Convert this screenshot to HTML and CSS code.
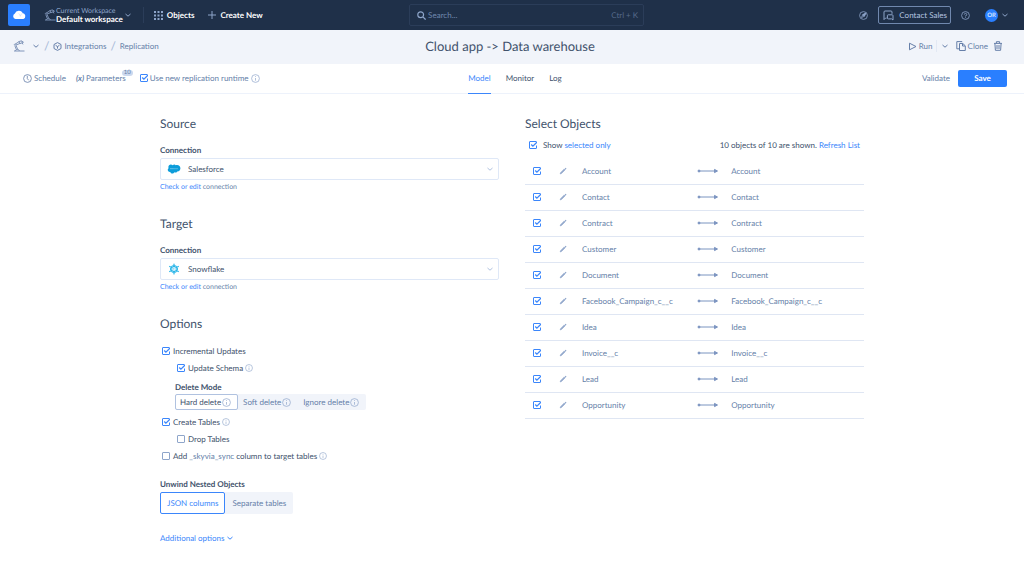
FILE: index.html
```html
<!DOCTYPE html>
<html lang="en">
<head>
    <meta charset="UTF-8">
    <title>Cloud app -> Data warehouse</title>
    <link rel="stylesheet" href="styles.css">
</head>
<body>
<svg class="sprite" aria-hidden="true">
    <symbol id="chevron" viewBox="0 0 8 8"><path d="M1.5 3 L4 5.2 L6.5 3"/></symbol>
    <symbol id="info" viewBox="0 0 9 9"><circle cx="4.5" cy="4.5" r="3.9"/><path d="M4.5 4 V6.7 M4.5 2.2 V3"/></symbol>
    <symbol id="robot" viewBox="0 0 12 12"><path d="M1 11 H11.5 M2.2 10.8 C2.4 9 6.2 9 6.4 10.8 M3.2 9.2 L1.8 5.6 M4.6 9.2 L3 5.4 M1.4 5.2 a.9 .9 0 1 1 1.5 .2 M2.4 4 L5.8 1.8 M3.2 5 L7 3.4 M5.8 1.6 L8.6 .8 L9.4 2.8 L7 3.5 Z M9 1.4 L10.8 2.4 M9.2 2.9 L10 4.4"/></symbol>
    <symbol id="pencil" viewBox="0 0 8 8"><path class="fill" d="M1.2 6.9 L1.6 5.7 L5.4 1.9 L6.2 2.7 L2.4 6.5 Z" stroke-width=".7"/><path d="M6.2 1.1 L7.1 2" stroke-width="1.2"/></symbol>
    <symbol id="arrow" viewBox="0 0 22 6"><path d="M2 3 H18"/><circle class="fill" cx="2" cy="3" r="1" /><path class="fill" d="M17.5 1.4 L20.5 3 L17.5 4.6 Z"/></symbol>
</svg>

<header class="topbar">
    <div class="top-left">
        <a class="logo" href="#" aria-label="Home">
            <svg viewBox="0 0 22 22"><path d="M7.5 15 A2.9 2.9 0 0 1 6.9 9.5 A4.3 4.3 0 0 1 14.7 8.9 A3.2 3.2 0 0 1 15.4 15 Z" fill="#fff"/><path d="M10.5 9.5 Q12 10 12.3 12.3 M14.7 9.3 Q12.8 9.8 12.3 12.3" fill="none" stroke="#b9d3ff" stroke-width=".5"/></svg>
        </a>
        <button class="workspace">
            <svg class="icon i12"><use href="#robot"/></svg>
            <span class="ws-text"><small>Current Workspace</small><b>Default workspace</b></span>
            <svg class="icon i8"><use href="#chevron"/></svg>
        </button>
        <button class="objects">
            <svg class="icon i9" viewBox="0 0 9 9"><path class="fill" d="M0 0h2v2H0z M3.5 0h2v2h-2z M7 0h2v2H7z M0 3.5h2v2H0z M3.5 3.5h2v2h-2z M7 3.5h2v2H7z M0 7h2v2H0z M3.5 7h2v2h-2z M7 7h2v2H7z" stroke="none"/></svg>
            Objects
        </button>
        <button class="create">
            <svg class="icon i8" viewBox="0 0 8 8"><path d="M4 0 V8 M0 4 H8"/></svg>
            Create New
        </button>
    </div>
    <label class="search">
        <svg class="icon i9" viewBox="0 0 9 9"><circle cx="3.7" cy="3.7" r="2.9" stroke-width="1.2"/><path d="M5.9 5.9 L8.6 8.6" stroke-width="1.3"/></svg>
        <input type="text" placeholder="Search..." aria-label="Search">
        <kbd>Ctrl + K</kbd>
    </label>
    <div class="top-right">
        <button aria-label="Explore"><svg class="icon i9 thin" viewBox="0 0 9 9"><circle cx="4.5" cy="4.5" r="3.9"/><path d="M2.5 6.5 L3.7 3.7 L6.7 2.3 L5.3 5.3 Z"/><path class="fill" d="M3.7 3.7 L6.7 2.3 L5.3 5.3 Z"/></svg></button>
        <button class="contact">
            <svg class="icon i11" viewBox="0 0 11 11"><path d="M3.6 8 H2.6 L1 9.6 V2 Q1 1 2 1 H8 Q9 1 9 2 V3.8 M5.2 4.8 H9.2 Q10 4.8 10 5.6 V10 L8.6 8.9 H5.2 Q4.4 8.9 4.4 8 V5.6 Q4.4 4.8 5.2 4.8 Z"/></svg>
            Contact Sales
        </button>
        <button aria-label="Help"><svg class="icon i9 thin" viewBox="0 0 9 9"><circle cx="4.5" cy="4.5" r="3.9"/><path d="M3.3 3.6 A1.2 1.2 0 1 1 4.5 4.8 V5.4 M4.5 6.2 V6.9"/></svg></button>
        <button class="user"><span class="avatar">OR</span><svg class="icon i8"><use href="#chevron"/></svg></button>
    </div>
</header>

<div class="titlebar">
    <nav class="crumbs">
        <button aria-label="Workspace"><svg class="icon i12"><use href="#robot"/></svg><svg class="icon i8"><use href="#chevron"/></svg></button>
        <span class="slash">/</span>
        <a href="#"><svg class="icon i9" viewBox="0 0 9 9"><path d="M4.5 .6 L8 2.5 V6.5 L4.5 8.4 L1 6.5 V2.5 Z M2.6 3.4 L4.5 4.5 L6.4 3.4 M4.5 4.5 V6.6"/></svg>Integrations</a>
        <span class="slash">/</span>
        <a href="#">Replication</a>
    </nav>
    <h1>Cloud app -&gt; Data warehouse</h1>
    <div class="actions">
        <button><svg class="icon i9" viewBox="0 0 9 9"><path d="M1.5 1.2 L8 4.5 L1.5 7.8 Z"/></svg>Run</button>
        <button class="run-more" aria-label="Run options"><svg class="icon i8"><use href="#chevron"/></svg></button>
        <button class="clone"><svg class="icon i10" viewBox="0 0 10 10"><path d="M3.5 2.5 H6.8 L9.3 4.8 V9.5 H3.5 Z M6.5 2.5 V5 H9 M3.3 7.8 H.8 V.6 H6.2"/></svg>Clone</button>
        <button aria-label="Delete"><svg class="icon i10" viewBox="0 0 10 10"><path d="M1 2.4 H9 M3.4 2.2 V.7 H6.6 V2.2 M1.9 2.6 L2.4 9.3 H7.6 L8.1 2.6 M4 4 V8 M6 4 V8"/></svg></button>
    </div>
</div>

<div class="toolbar">
    <div class="tools">
        <button><svg class="icon i9 thin" viewBox="0 0 9 9"><circle cx="4.5" cy="4.5" r="3.9"/><path d="M4.3 1.8 V4.7 L5.8 6.3"/></svg>Schedule</button>
        <button class="params"><i>(x)</i>Parameters<span class="badge">10</span></button>
        <label class="runtime"><input type="checkbox" checked>Use new replication runtime<svg class="icon i9 light"><use href="#info"/></svg></label>
    </div>
    <nav class="tabs">
        <a class="selected" href="#">Model</a>
        <a href="#">Monitor</a>
        <a href="#">Log</a>
    </nav>
    <div class="actions">
        <button>Validate</button>
        <button class="save">Save</button>
    </div>
</div>

<main class="content">
    <div class="column">
        <section class="connection">
            <h2>Source</h2>
            <label class="caption" for="source">Connection</label>
            <div class="select">
                <svg class="brand" viewBox="0 0 14 10"><path d="M5.7 1.3 C6.8 0 8.1 .4 8.7 1.3 C11.2 .3 13.6 2 13.4 4.6 C13.2 6.7 11.7 7.6 10.2 7.4 C9.5 8.7 8.3 8.7 7.4 8.3 C6.4 10.2 3.8 9.8 3.3 8 C.8 8.3 -.1 5.3 1.6 4.2 C.5 1.2 3.7 -.4 5.7 1.3 Z" fill="#0d9dda"/><path d="M3 4.7 H11" stroke="#a9def5" stroke-width=".7" stroke-dasharray=".8 .3"/></svg>
                <select id="source"><option>Salesforce</option></select>
                <svg class="icon i8 caret"><use href="#chevron"/></svg>
            </div>
            <p class="hint"><a href="#">Check or edit</a> connection</p>
        </section>
        <section class="connection">
            <h2>Target</h2>
            <label class="caption" for="target">Connection</label>
            <div class="select">
                <svg class="brand" viewBox="0 0 14 12"><g fill="none" stroke="#29b5e8" stroke-width="1.2" stroke-linecap="round"><path d="M7 5.4 L7.6 6 L7 6.6 L6.4 6 Z" stroke-width=".5"/><path id="flake" d="M7 1 V3.6 M5.7 2.8 L7 3.9 L8.3 2.8"/><use href="#flake" transform="rotate(60 7 6)"/><use href="#flake" transform="rotate(120 7 6)"/><use href="#flake" transform="rotate(180 7 6)"/><use href="#flake" transform="rotate(240 7 6)"/><use href="#flake" transform="rotate(300 7 6)"/></g></svg>
                <select id="target"><option>Snowflake</option></select>
                <svg class="icon i8 caret"><use href="#chevron"/></svg>
            </div>
            <p class="hint"><a href="#">Check or edit</a> connection</p>
        </section>
        <section class="options">
            <h2>Options</h2>
            <label class="check"><input type="checkbox" checked>Incremental Updates</label>
            <label class="check sub"><input type="checkbox" checked>Update Schema<svg class="icon i8 light"><use href="#info"/></svg></label>
            <div class="delete-mode">
                <span class="caption">Delete Mode</span>
                <div class="segments">
                    <button class="selected">Hard delete<svg class="icon i9 light"><use href="#info"/></svg></button>
                    <button>Soft delete<svg class="icon i9 light"><use href="#info"/></svg></button>
                    <button>Ignore delete<svg class="icon i9 light"><use href="#info"/></svg></button>
                </div>
            </div>
            <label class="check"><input type="checkbox" checked>Create Tables<svg class="icon i8 light"><use href="#info"/></svg></label>
            <label class="check sub"><input type="checkbox">Drop Tables</label>
            <label class="check"><input type="checkbox"><span>Add <em>_skyvia_sync</em> column to target tables</span><svg class="icon i8 light"><use href="#info"/></svg></label>
        </section>
        <section class="unwind">
            <span class="caption">Unwind Nested Objects</span>
            <div class="segments large">
                <button class="selected">JSON columns</button>
                <button>Separate tables</button>
            </div>
        </section>
        <button class="more">Additional options<svg class="icon i8"><use href="#chevron"/></svg></button>
    </div>

    <div class="column">
        <h2>Select Objects</h2>
        <div class="filter">
            <input type="checkbox" id="show" checked>
            <label for="show">Show <a href="#">selected only</a></label>
            <span class="count">10 objects of 10 are shown. <a href="#">Refresh List</a></span>
        </div>
        <table class="mapping">
            <tr><td class="c-check"><input type="checkbox" checked aria-label="Account"></td><td class="c-edit"><button aria-label="Edit"><svg class="icon i8"><use href="#pencil"/></svg></button></td><td class="c-name">Account</td><td class="c-arrow"><svg class="icon arrow"><use href="#arrow"/></svg></td><td>Account</td></tr>
            <tr><td class="c-check"><input type="checkbox" checked aria-label="Contact"></td><td class="c-edit"><button aria-label="Edit"><svg class="icon i8"><use href="#pencil"/></svg></button></td><td class="c-name">Contact</td><td class="c-arrow"><svg class="icon arrow"><use href="#arrow"/></svg></td><td>Contact</td></tr>
            <tr><td class="c-check"><input type="checkbox" checked aria-label="Contract"></td><td class="c-edit"><button aria-label="Edit"><svg class="icon i8"><use href="#pencil"/></svg></button></td><td class="c-name">Contract</td><td class="c-arrow"><svg class="icon arrow"><use href="#arrow"/></svg></td><td>Contract</td></tr>
            <tr><td class="c-check"><input type="checkbox" checked aria-label="Customer"></td><td class="c-edit"><button aria-label="Edit"><svg class="icon i8"><use href="#pencil"/></svg></button></td><td class="c-name">Customer</td><td class="c-arrow"><svg class="icon arrow"><use href="#arrow"/></svg></td><td>Customer</td></tr>
            <tr><td class="c-check"><input type="checkbox" checked aria-label="Document"></td><td class="c-edit"><button aria-label="Edit"><svg class="icon i8"><use href="#pencil"/></svg></button></td><td class="c-name">Document</td><td class="c-arrow"><svg class="icon arrow"><use href="#arrow"/></svg></td><td>Document</td></tr>
            <tr><td class="c-check"><input type="checkbox" checked aria-label="Facebook_Campaign_c__c"></td><td class="c-edit"><button aria-label="Edit"><svg class="icon i8"><use href="#pencil"/></svg></button></td><td class="c-name">Facebook_Campaign_c__c</td><td class="c-arrow"><svg class="icon arrow"><use href="#arrow"/></svg></td><td>Facebook_Campaign_c__c</td></tr>
            <tr><td class="c-check"><input type="checkbox" checked aria-label="Idea"></td><td class="c-edit"><button aria-label="Edit"><svg class="icon i8"><use href="#pencil"/></svg></button></td><td class="c-name">Idea</td><td class="c-arrow"><svg class="icon arrow"><use href="#arrow"/></svg></td><td>Idea</td></tr>
            <tr><td class="c-check"><input type="checkbox" checked aria-label="Invoice__c"></td><td class="c-edit"><button aria-label="Edit"><svg class="icon i8"><use href="#pencil"/></svg></button></td><td class="c-name">Invoice__c</td><td class="c-arrow"><svg class="icon arrow"><use href="#arrow"/></svg></td><td>Invoice__c</td></tr>
            <tr><td class="c-check"><input type="checkbox" checked aria-label="Lead"></td><td class="c-edit"><button aria-label="Edit"><svg class="icon i8"><use href="#pencil"/></svg></button></td><td class="c-name">Lead</td><td class="c-arrow"><svg class="icon arrow"><use href="#arrow"/></svg></td><td>Lead</td></tr>
            <tr><td class="c-check"><input type="checkbox" checked aria-label="Opportunity"></td><td class="c-edit"><button aria-label="Edit"><svg class="icon i8"><use href="#pencil"/></svg></button></td><td class="c-name">Opportunity</td><td class="c-arrow"><svg class="icon arrow"><use href="#arrow"/></svg></td><td>Opportunity</td></tr>
        </table>
    </div>
</main>
</body>
</html>
```
FILE: styles.css
```css
*{
    margin: 0;
    padding: 0;
    box-sizing: border-box;
}
body{
    font: 8px/12px Lato, sans-serif;
    text-rendering: geometricPrecision;
    color: #41526c;
    background: #fff;
}
a{
    color: #3b86fb;
    text-decoration: none;
}
button,input,select{
    font: inherit;
    color: inherit;
    text-rendering: inherit;
    border: none;
    background: none;
}
button{
    display: flex;
    align-items: center;
    white-space: nowrap;
    cursor: pointer;
}
h1,h2{
    font-weight: normal;
    line-height: 20px;
}
h1{
    font-size: 13px;
}
h2{
    font-size: 12px;
}
/* icons */
.sprite{
    display: none;
}
.icon{
    flex: none;
    display: block;
    fill: none;
    stroke: currentColor;
    stroke-width: 1;
}
.fill{
    fill: currentColor;
}
.i8{
    width: 8px;
    height: 8px;
}
.i9{
    width: 9px;
    height: 9px;
}
.i10{
    width: 10px;
    height: 10px;
}
.i11{
    width: 11px;
    height: 11px;
}
.i12{
    width: 12px;
    height: 12px;
    stroke-width: 0.8;
}
.thin{
    stroke-width: 0.8;
}
.light{
    color: #8ea5ca;
    stroke-width: 0.7;
}
input[type=checkbox]{
    appearance: none;
    flex: none;
    display: block;
    width: 8px;
    height: 8px;
    border: 1px solid #8ea5ca;
    border-radius: 1px;
}
input[type=checkbox]:checked{
    border: none;
    background: url("data:image/svg+xml,%3Csvg xmlns='http://www.w3.org/2000/svg' viewBox='0 0 8 8' fill='none' stroke='%233b86fb'%3E%3Cpath d='M7.5 4.5 V7.5 H.5 V.5 H7.5 V2'/%3E%3Cpath d='M2.2 3.5 L3.9 5.2 L7.4 1.8' stroke-width='1.3'/%3E%3C/svg%3E");
}
/* top bar */
.topbar{
    display: grid;
    grid-template-columns: 14fr 235px 13fr;
    align-items: center;
    height: 30px;
    background: #1f3049;
    color: #8ea5ca;
}
.top-left,.top-right{
    display: flex;
    align-items: center;
}
.top-left{
    padding-left: 8px;
}
.top-right{
    justify-content: flex-end;
    gap: 10px;
    padding-right: 15px;
}
.logo{
    width: 22px;
    height: 22px;
    border-radius: 2px;
    background: #2a7fff;
}
.logo svg{
    display: block;
}
.workspace{
    margin-left: 14px;
}
.ws-text{
    display: flex;
    flex-direction: column;
    margin-right: 1px;
    text-align: left;
    line-height: 8px;
}
.ws-text small{
    font-size: 7px;
}
.ws-text b{
    color: #fff;
}
.objects,.create{
    color: #fff;
    font-weight: bold;
}
.objects .icon,.create .icon{
    color: #8ea5ca;
    margin-right: 4px;
}
.objects{
    height: 16px;
    margin-left: 11px;
    padding-left: 10px;
    border-left: 1px solid #2b3d59;
}
.create{
    margin-left: 14px;
}
.search{
    display: flex;
    align-items: center;
    gap: 2px;
    height: 22px;
    padding: 0 5px 0 7px;
    border: 1px solid #2b3d59;
    border-radius: 2px;
}
.search input{
    flex: 1;
    min-width: 0;
    outline: none;
}
.search input::placeholder{
    color: #7088ae;
}
.search kbd{
    font: inherit;
    color: #566a8a;
}
.contact{
    gap: 5px;
    height: 18px;
    padding: 0 3px 0 4px;
    border: 1px solid #7088ae;
    border-radius: 2px;
    color: #b5c5e0;
}
.contact .icon{
    color: #8ea5ca;
}
.user{
    gap: 3px;
    margin-left: 5px;
}
.avatar{
    width: 13px;
    border-radius: 50%;
    background: #2a7fff;
    color: #d5e4ff;
    font-size: 6px;
    font-weight: bold;
    line-height: 13px;
    text-align: center;
}
/* title and tool bars */
.titlebar,.toolbar{
    display: grid;
    grid-template-columns: 1fr auto 1fr;
    align-items: center;
    color: #667fa9;
}
.titlebar{
    height: 34px;
    padding: 0 17px 2px 13px;
    background: #f1f4fa;
}
.titlebar h1{
    color: #41526c;
}
.titlebar .actions{
    padding-right: 4px;
}
.crumbs,.crumbs a,.crumbs button,.tools,.actions{
    display: flex;
    align-items: center;
}
.crumbs{
    gap: 4px;
}
.crumbs a{
    gap: 2px;
    color: #667fa9;
}
.crumbs button{
    gap: 7px;
}
.slash{
    color: #a9bbd9;
    font-size: 12px;
}
.actions{
    justify-content: flex-end;
}
.actions button{
    gap: 2px;
}
.run-more{
    height: 12px;
    margin-left: 3px;
    padding: 0 7px 0 4px;
    border-left: 1px solid #e3e9f4;
}
.clone{
    margin-right: 5px;
}
.toolbar{
    height: 30px;
    padding: 0 17px 0 23px;
    border-bottom: 1px solid #edf2fb;
}
.tools,.toolbar .actions{
    padding-bottom: 2px;
}
.tools button,.runtime{
    display: flex;
    align-items: center;
    gap: 2px;
}
.params{
    position: relative;
    margin: 0 14px 0 10px;
}
.params i{
    font-weight: bold;
}
.badge{
    position: absolute;
    top: -2px;
    right: -7px;
    padding: 0 2px;
    border-radius: 4px;
    background: #cbd8ee;
    font-size: 6px;
    line-height: 6px;
}
.tabs{
    display: flex;
    gap: 15px;
    height: 30px;
}
.tabs a{
    color: #41526c;
    line-height: 28px;
    border-bottom: 1px solid transparent;
}
.tabs .selected{
    color: #3b86fb;
    border-color: #3b86fb;
}
.save.save{
    justify-content: center;
    width: 49px;
    height: 17px;
    margin-left: 8px;
    border-radius: 2px;
    background: #2a7fff;
    color: #fff;
    font-weight: bold;
}
/* content */
.content{
    display: grid;
    grid-template-columns: 1fr 1fr;
    gap: 26px;
    max-width: 704px;
    margin: 0 auto;
    padding: 20px 0;
}
.caption{
    display: block;
    font-weight: bold;
}
.connection{
    margin-bottom: 21px;
}
.connection h2{
    margin-bottom: 10px;
}
.select{
    position: relative;
    margin: 2px 0 1px;
}
.select select{
    display: block;
    appearance: none;
    width: 100%;
    height: 22px;
    padding-left: 27px;
    border: 1px solid #dfe8f7;
    border-radius: 2px;
}
.brand{
    position: absolute;
    top: 5px;
    left: 7px;
    width: 14px;
    height: 12px;
}
.caret{
    position: absolute;
    top: 7px;
    right: 5px;
    color: #b0c2e0;
}
.hint{
    font-size: 7px;
    color: #667fa9;
}
.check{
    display: flex;
    align-items: center;
    gap: 2px;
    height: 17px;
    padding-left: 2px;
}
.check input{
    margin-right: 1px;
}
.check em{
    font-style: normal;
    color: #667fa9;
}
.options h2{
    margin-bottom: 8px;
}
.sub{
    padding-left: 17px;
}
.delete-mode{
    margin: 5px 0 3px 15px;
}
.segments{
    display: flex;
    width: fit-content;
    height: 16px;
    margin-top: 1px;
    border-radius: 2px;
    background: #f1f4fa;
    color: #667fa9;
}
.segments button{
    gap: 1px;
    padding: 0 6px 0 4px;
    border: 1px solid transparent;
    border-radius: 2px;
}
.segments .selected{
    border-color: #b0c2e0;
    background: #fff;
    color: #41526c;
}
.unwind{
    margin: 14px 0 18px;
}
.segments.large{
    height: 22px;
    margin-top: 2px;
}
.segments.large button{
    padding: 0 6px;
}
.segments.large .selected{
    border-color: #3b86fb;
    color: #3b86fb;
}
.more{
    gap: 2px;
    color: #3b86fb;
}
.filter{
    display: flex;
    align-items: center;
    gap: 6px;
    margin: 5px 0 7px;
    padding: 0 4px;
}
.count{
    margin-left: auto;
}
.mapping{
    width: 100%;
    table-layout: fixed;
    border-collapse: collapse;
    color: #667fa9;
}
.mapping td{
    height: 26px;
    border-bottom: 1px solid #dfe6f3;
}
.c-check{
    width: 34px;
    padding-left: 8px;
}
.c-edit{
    width: 23px;
    color: #8ea5ca;
}
.c-name{
    width: 34%;
}
.c-arrow{
    width: 34px;
    color: #7b94c0;
}
.arrow{
    width: 22px;
    height: 6px;
}
```
